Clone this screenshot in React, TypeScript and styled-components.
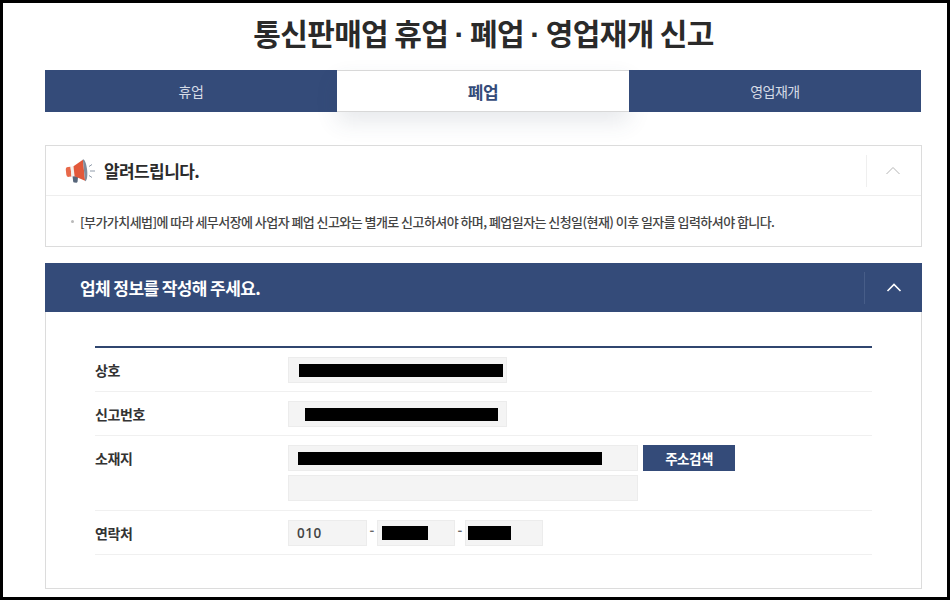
import React from "react";
import styled, { createGlobalStyle } from "styled-components";

const NAVY = "#344b79";

const GlobalStyle = createGlobalStyle`
  html, body {
    margin: 0;
    padding: 0;
    background: #000;
  }
  * {
    box-sizing: border-box;
  }
`;

const Frame = styled.div`
  width: 950px;
  height: 600px;
  overflow: hidden;
  background: #fff;
  border: 3px solid #000;
  padding: 0 25px 0 42px;
  font-family: "Noto Sans CJK KR", "Noto Sans", sans-serif;
  color: #333;
`;

const Title = styled.h1`
  margin: 0;
  height: 67px;
  padding-top: 8px;
  text-align: center;
  font-size: 30px;
  line-height: 42px;
  font-weight: 700;
  letter-spacing: -0.62px;
  color: #2a2a2a;
`;

const TitleDot = styled.span`
  font-family: "Liberation Sans", sans-serif;
`;

const Tabs = styled.div`
  display: flex;
  width: 876px;
  height: 42px;
`;

const Tab = styled.div<{ $active?: boolean }>`
  flex: 1;
  display: flex;
  align-items: center;
  justify-content: center;
  font-size: ${({ $active }) => ($active ? "17px" : "14px")};
  font-weight: ${({ $active }) => ($active ? 700 : 400)};
  letter-spacing: -0.5px;
  color: ${({ $active }) => ($active ? NAVY : "#d6dbe6")};
  background: ${({ $active }) => ($active ? "#fff" : NAVY)};
  ${({ $active }) =>
    $active &&
    `
    border-top: 1px solid #d8d8d8;
    border-bottom: 1px solid #d8d8d8;
    box-shadow: 0 10px 22px rgba(60, 70, 100, 0.12);
  `}
`;

const NoticeCard = styled.section`
  margin-top: 33px;
  width: 877px;
  height: 102px;
  border: 1px solid #dcdcdc;
`;

const NoticeHead = styled.div`
  display: flex;
  align-items: center;
  height: 50px;
  border-bottom: 1px solid #eeeeee;
  padding-left: 19px;
`;

const NoticeTitle = styled.h2`
  margin: 0 0 0 7px;
  flex: 1;
  font-size: 17px;
  font-weight: 700;
  letter-spacing: -0.6px;
  color: #2b2b2b;
`;

const Toggle = styled.div<{ $dark?: boolean }>`
  display: flex;
  align-items: center;
  justify-content: center;
  width: ${({ $dark }) => ($dark ? "58px" : "55px")};
  height: 32px;
  padding-right: ${({ $dark }) => ($dark ? 0 : 3)}px;
  border-left: 1px solid ${({ $dark }) => ($dark ? "#475d88" : "#efefef")};
`;

const NoticeBody = styled.p`
  display: flex;
  align-items: center;
  margin: 0;
  height: 50px;
  padding-left: 25px;
  font-size: 13px;
  font-weight: 500;
  letter-spacing: -0.56px;
  color: #444;
`;

const Bullet = styled.span`
  width: 3px;
  height: 3px;
  margin-right: 6px;
  border-radius: 50%;
  background: #b9b9b9;
`;

const FormCard = styled.section`
  margin-top: 16px;
  width: 877px;
  height: 326px;
  border: 1px solid #dcdcdc;
  border-top: 0;
`;

const FormHead = styled.div`
  display: flex;
  align-items: center;
  justify-content: space-between;
  height: 49px;
  margin: 0 -1px;
  padding-left: 35px;
  background: ${NAVY};
`;

const FormTitle = styled.h2`
  margin: 0;
  font-size: 17px;
  font-weight: 700;
  letter-spacing: -0.6px;
  color: #fff;
`;

const FormTable = styled.div`
  margin: 34px 49px 0 49px;
  border-top: 2px solid #30466f;
`;

const Row = styled.div<{ $height: number }>`
  display: flex;
  height: ${({ $height }) => $height}px;
  padding-top: 9px;
  border-bottom: 1px solid #f0f0f0;
`;

const Label = styled.div`
  width: 193px;
  padding-top: 3px;
  font-size: 14px;
  line-height: 20px;
  font-weight: 700;
  letter-spacing: -0.4px;
  color: #333;
`;

const FieldStack = styled.div`
  display: flex;
  flex-direction: column;
  gap: 4px;
`;

const FieldLine = styled.div`
  display: flex;
  align-items: center;
  align-self: flex-start;
`;

const Field = styled.div<{ $width: number; $inset?: number }>`
  display: flex;
  align-items: center;
  width: ${({ $width }) => $width}px;
  height: 26px;
  padding-left: ${({ $inset }) => $inset ?? 9}px;
  background: #f4f4f4;
  border: 1px solid #ececec;
  font-family: "Open Sans", "Noto Sans", sans-serif;
  font-size: 13.5px;
  font-weight: 600;
  letter-spacing: 0.5px;
  color: #444;
`;

const Redacted = styled.span<{ $width: number; $height?: number }>`
  display: block;
  width: ${({ $width }) => $width}px;
  height: ${({ $height }) => $height ?? 13}px;
  background: #000;
`;

const Dash = styled.span`
  width: 10px;
  margin-top: -8px;
  text-align: center;
  font-size: 13px;
  font-weight: 700;
  color: #666;
`;

const SearchButton = styled.button`
  width: 92px;
  height: 26px;
  margin-left: 5px;
  padding: 0;
  border: 0;
  background: ${NAVY};
  color: #fff;
  font-family: inherit;
  font-size: 13.5px;
  font-weight: 700;
  letter-spacing: -0.5px;
`;

const Megaphone = () => (
  <svg width="32" height="24" viewBox="0 0 32 24" aria-hidden="true">
    <g transform="rotate(-6 12 12)">
      <path d="M7 16.500l5.500 1-1 5a1.200 1.200 0 0 1-1.400 1l-2-.4a1.200 1.200 0 0 1-1-1.400z" fill="#56657a" />
      <path d="M1 9.500a2.500 2.500 0 0 1 2.500-2.500H6v10H3.500A2.500 2.500 0 0 1 1 14.500z" fill="#e8694a" />
      <path d="M6 7h3v10H6z" fill="#f4f0ec" />
      <path d="M9 7l10-5.500v21L9 17z" fill="#e2583a" />
      <path d="M19 1c1.800 0 3.200 4.800 3.200 11S20.800 23 19 23z" fill="#7f8b9c" />
    </g>
    <path d="M25 12h5M24 7.500l3-2M24 16.500l3 2" stroke="#8f9baa" strokeWidth="1" fill="none" />
  </svg>
);

const Chevron = ({ color, weight }: { color: string; weight: number }) => (
  <svg width="16" height="9" viewBox="0 0 16 9" aria-hidden="true">
    <path d="M1.500 8L8 1.500 14.500 8" fill="none" stroke={color} strokeWidth={weight} />
  </svg>
);

export default function App() {
  return (
    <>
      <GlobalStyle />
      <Frame>
        <Title>
          통신판매업 휴업 <TitleDot>·</TitleDot> 폐업 <TitleDot>·</TitleDot> 영업재개 신고
        </Title>
        <Tabs>
          <Tab>휴업</Tab>
          <Tab $active>폐업</Tab>
          <Tab>영업재개</Tab>
        </Tabs>

        <NoticeCard>
          <NoticeHead>
            <Megaphone />
            <NoticeTitle>알려드립니다.</NoticeTitle>
            <Toggle>
              <Chevron color="#b5b5b5" weight={1} />
            </Toggle>
          </NoticeHead>
          <NoticeBody>
            <Bullet />
            [부가가치세법]에 따라 세무서장에 사업자 폐업 신고와는 별개로 신고하셔야 하며, 폐업일자는 신청일(현재) 이후 일자를 입력하셔야 합니다.
          </NoticeBody>
        </NoticeCard>

        <FormCard>
          <FormHead>
            <FormTitle>업체 정보를 작성해 주세요.</FormTitle>
            <Toggle $dark>
              <Chevron color="#fff" weight={1.6} />
            </Toggle>
          </FormHead>
          <FormTable>
            <Row $height={44}>
              <Label>상호</Label>
              <Field $width={219} $inset={10}>
                <Redacted $width={204} />
              </Field>
            </Row>
            <Row $height={44}>
              <Label>신고번호</Label>
              <Field $width={219} $inset={16}>
                <Redacted $width={193} />
              </Field>
            </Row>
            <Row $height={75}>
              <Label>소재지</Label>
              <FieldStack>
                <FieldLine>
                  <Field $width={350}>
                    <Redacted $width={304} />
                  </Field>
                  <SearchButton>주소검색</SearchButton>
                </FieldLine>
                <Field $width={350} />
              </FieldStack>
            </Row>
            <Row $height={44}>
              <Label>연락처</Label>
              <FieldLine>
                <Field $width={79} $inset={8}>010</Field>
                <Dash>-</Dash>
                <Field $width={78} $inset={4}>
                  <Redacted $width={46} $height={14} />
                </Field>
                <Dash>-</Dash>
                <Field $width={78} $inset={2}>
                  <Redacted $width={43} $height={14} />
                </Field>
              </FieldLine>
            </Row>
          </FormTable>
        </FormCard>
      </Frame>
    </>
  );
}
